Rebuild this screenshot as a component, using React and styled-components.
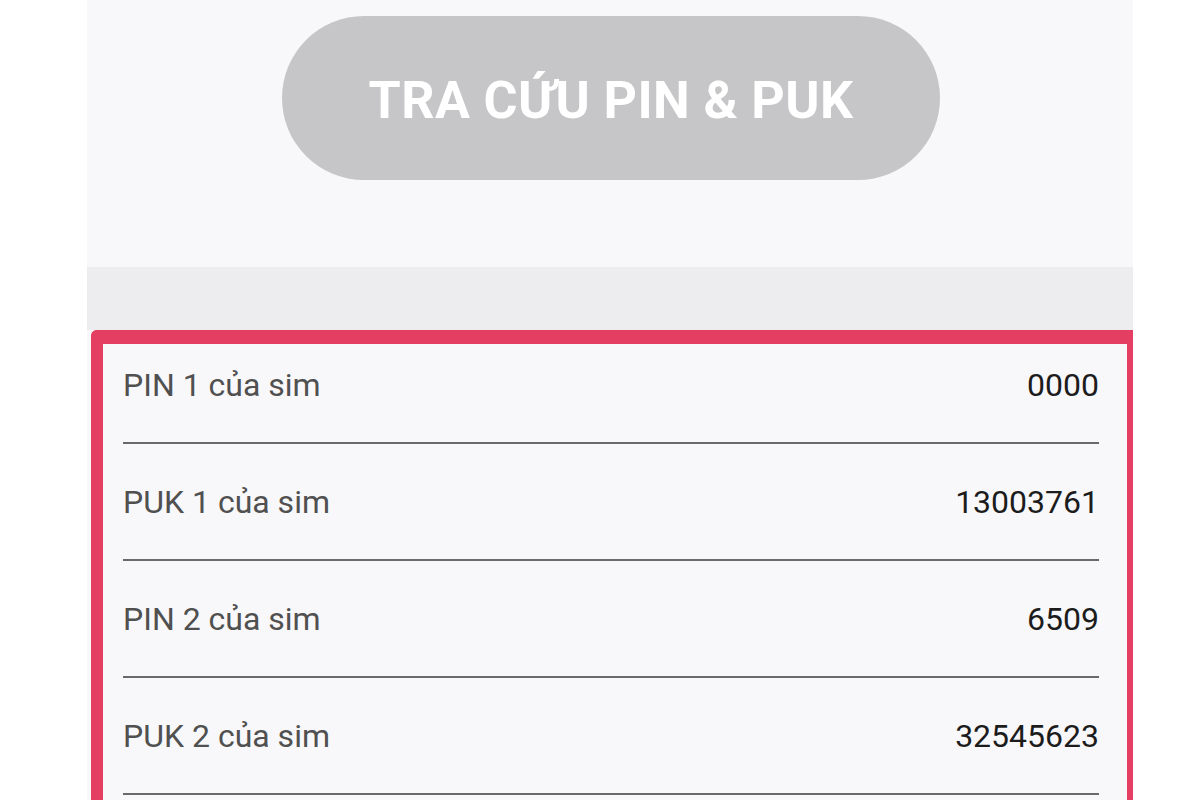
import React from 'react';
import styled, { createGlobalStyle } from 'styled-components';

const GlobalStyle = createGlobalStyle`
  html, body {
    margin: 0;
    padding: 0;
    background: #ffffff;
    font-family: Roboto, "Noto Sans", "Liberation Sans", sans-serif;
  }
`;

// Khung chính (màn hình điện thoại)
const Screen = styled.div`
  width: 1046px;
  margin-left: 87px;
  height: 800px;
  overflow: hidden;
  background: #f8f8fa;
  display: flex;
  flex-direction: column;
`;

const ButtonArea = styled.div`
  flex-shrink: 0;
  height: 267px;
  display: flex;
  justify-content: center;
  align-items: flex-start;
  padding-top: 16px;
  box-sizing: border-box;
`;

const LookupButton = styled.button`
  width: 658px;
  height: 164px;
  margin-left: 2px;
  border: none;
  border-radius: 82px;
  background: #c6c6c8;
  color: #ffffff;
  font-family: Roboto, "Noto Sans", sans-serif;
  font-weight: 700;
  font-size: 52px;
  letter-spacing: 0.4px;
  padding: 4px 0 0;
  cursor: default;
`;

const Divider = styled.div`
  flex-shrink: 0;
  height: 63px;
  background: #ededef;
`;

// Khung viền đỏ chứa kết quả
const ResultBox = styled.div`
  flex: 1;
  margin-left: 4px;
  border-style: solid;
  border-color: #e43f62;
  border-width: 14px 6px 0 12px;
  border-top-left-radius: 6px;
  background: #f8f8fa;
  padding: 0 28px 0 20px;
`;

const Row = styled.div`
  display: flex;
  justify-content: space-between;
  align-items: center;
  height: ${(p) => (p.$first ? '100px' : '117px')};
  padding-bottom: ${(p) => (p.$first ? '16px' : '0')};
  box-sizing: border-box;
  border-bottom: 2px solid #6a6a6a;
`;

const Label = styled.span`
  font-size: 32px;
  color: #505050;
`;

const Value = styled.span`
  font-size: 32px;
  color: #1c1c1c;
`;

const rows = [
  { label: 'PIN 1 của sim', value: '0000' },
  { label: 'PUK 1 của sim', value: '13003761' },
  { label: 'PIN 2 của sim', value: '6509' },
  { label: 'PUK 2 của sim', value: '32545623' },
];

const App = () => (
  <>
    <GlobalStyle />
    <Screen>
      <ButtonArea>
        <LookupButton>TRA CỨU PIN &amp; PUK</LookupButton>
      </ButtonArea>
      <Divider />
      <ResultBox>
        {rows.map((r, i) => (
          <Row key={i} $first={i === 0}>
            <Label>{r.label}</Label>
            <Value>{r.value}</Value>
          </Row>
        ))}
      </ResultBox>
    </Screen>
  </>
);

export default App;
